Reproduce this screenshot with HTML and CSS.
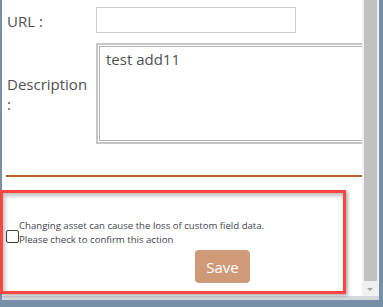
FILE: index.html
```html
<!DOCTYPE html>
<html lang="en">
<head>
    <meta charset="UTF-8">
    <title>Edit asset</title>
    <link rel="stylesheet" href="styles.css">
</head>
<body>
    <div class="dialog">
        <div class="content">
            <div class="row row_url">
                <label class="label">URL :</label>
                <input class="text_input" type="text">
            </div>
            <div class="row row_desc">
                <label class="label">Description :</label>
                <textarea class="text_area">test add11</textarea>
            </div>
            <div class="divider"></div>
            <div class="confirm">
                <input class="check" type="checkbox">
                <span class="confirm_text">Changing asset can cause the loss of custom field data.<br>Please check to confirm this action</span>
            </div>
            <div class="actions">
                <button class="save_btn">Save</button>
            </div>
        </div>
        <div class="scrollbar">
            <div class="thumb"></div>
            <div class="arrow_down"></div>
        </div>
        <div class="highlight"></div>
    </div>
</body>
</html>
```

FILE: styles.css
```css
html, body {
    margin: 0;
    padding: 0;
}
body {
    width: 383px;
    height: 307px;
    overflow: hidden;
    background-color: #7790a8;
    font-family: "Open Sans", "Noto Sans", sans-serif;
}
.dialog {
    position: relative;
    display: flex;
    margin-left: 2px;
    width: 377px;
    height: 296px;
    border-bottom: 4px solid #d3d8dd;
    background-color: #ffffff;
}
.content {
    width: 360px;
    height: 296px;
    overflow: hidden;
    padding-left: 5px;
    box-sizing: border-box;
}
.row {
    display: flex;
    align-items: center;
}
.row_url {
    margin-top: 7px;
}
.row_desc {
    margin-top: 10px;
}
.label {
    flex: none;
    width: 89px;
    padding-right: 6px;
    box-sizing: border-box;
    font-size: 15px;
    line-height: 20px;
    color: #505050;
}
.row_url .label {
    padding-top: 2px;
}
.text_input {
    flex: none;
    width: 200px;
    height: 26px;
    margin: 0;
    padding: 0 6px;
    box-sizing: border-box;
    border: 1px solid #cccccc;
    outline: none;
}
.text_area {
    flex: none;
    width: 300px;
    height: 101px;
    margin: 0;
    padding: 4px 8px;
    box-sizing: border-box;
    border: 2px solid #c6c6c6;
    box-shadow: inset 0 0 0 1px #ffffff, inset 0 0 0 2px #b2b2b2;
    resize: none;
    outline: none;
    font-family: "Open Sans", "Noto Sans", sans-serif;
    font-size: 15px;
    line-height: 20px;
    color: #505050;
}
.divider {
    margin-top: 31px;
    margin-left: -1px;
    height: 2px;
    background-color: #b5622e;
}
.confirm {
    display: flex;
    align-items: flex-end;
    margin-top: 42px;
    margin-left: -1px;
}
.check {
    appearance: none;
    flex: none;
    margin: 0 0 4px 0;
    width: 13px;
    height: 13px;
    box-sizing: border-box;
    border: 1px solid #444444;
    border-radius: 2px;
    background-color: #ffffff;
}
.confirm_text {
    font-size: 9.6px;
    line-height: 14px;
    color: #3f4652;
}
.actions {
    display: flex;
    margin-top: 3px;
    padding-left: 188px;
}
.save_btn {
    width: 55px;
    height: 33px;
    border: none;
    border-radius: 4px;
    background-color: #d09a78;
    color: #ffffff;
    font-family: "Open Sans", "Noto Sans", sans-serif;
    font-size: 15px;
    padding: 0;
}
.scrollbar {
    position: relative;
    width: 17px;
    height: 296px;
    background-color: #f0f0f0;
}
.thumb {
    margin-left: 2px;
    width: 13px;
    height: 281px;
    background-color: #c1c1c1;
}
.arrow_down {
    margin: 7px 0 0 5px;
    width: 0;
    height: 0;
    border-left: 3px solid transparent;
    border-right: 3px solid transparent;
    border-top: 3px solid #a3a3a3;
}
.highlight {
    position: absolute;
    left: -2px;
    top: 190px;
    width: 340px;
    height: 98px;
    border: 3px solid #ff4444;
    box-shadow: inset 2px 3px 4px rgba(0, 0, 0, 0.25), 2px 2px 3px rgba(0, 0, 0, 0.3);
    pointer-events: none;
}
```
